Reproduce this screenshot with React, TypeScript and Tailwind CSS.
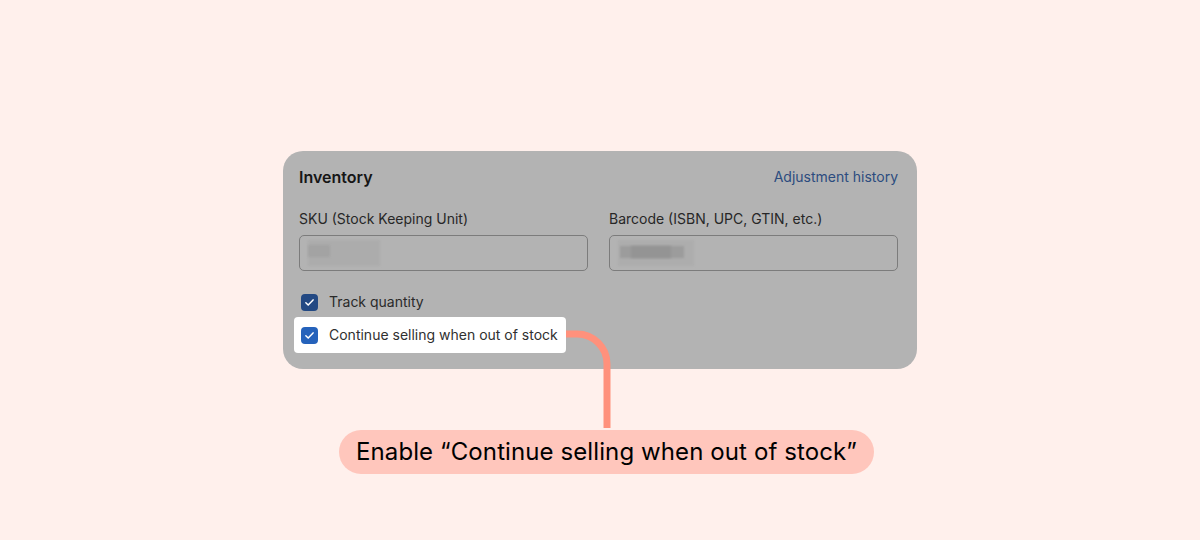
import React from 'react';

function Check() {
  return (
    <svg viewBox="0 0 16 16" className="w-[13px] h-[13px]" fill="none">
      <path d="M3.5 8.3l2.9 2.9 6-6.4" stroke="white" strokeWidth="1.8" strokeLinecap="round" strokeLinejoin="round" />
    </svg>
  );
}

function Box({ dim }: { dim?: boolean }) {
  return (
    <span className={`w-[17px] h-[17px] rounded-[4px] flex items-center justify-center flex-shrink-0 ${dim ? 'bg-[#234983]' : 'bg-[#2562bb]'}`}>
      <Check />
    </span>
  );
}

export default function App() {
  return (
    <div className="relative w-[1200px] h-[540px] bg-[#fff0ec] overflow-hidden" style={{ fontFamily: 'Inter, "Noto Sans", sans-serif' }}>
      {/* dimmed card */}
      <div className="ml-[283px] mt-[151px] w-[634px] h-[218px] rounded-[20px] bg-[#b3b3b3] pl-4 pr-[19px] pt-[16px]">
        <div className="flex items-center justify-between h-5">
          <h2 className="text-[16px] font-semibold text-[#161616]">Inventory</h2>
          <span className="text-sm text-[#2c4c7f]">Adjustment history</span>
        </div>

        <div className="grid grid-cols-2 gap-x-[21px] mt-[22px]">
          <div>
            <p className="text-sm leading-5 text-[#272727]">SKU (Stock Keeping Unit)</p>
            <div className="mt-[6px] h-9 rounded-[5px] border border-[#7c7c7c] relative overflow-hidden">
              <div className="absolute left-[8px] top-[4px] w-[72px] h-[26px] bg-[#acacac] blur-[1px]" />
              <div className="absolute left-[8px] top-[9px] w-[22px] h-[12px] bg-[#a3a3a3] blur-[1px]" />
            </div>
          </div>
          <div>
            <p className="text-sm leading-5 text-[#272727]">Barcode (ISBN, UPC, GTIN, etc.)</p>
            <div className="mt-[6px] h-9 rounded-[5px] border border-[#7c7c7c] relative overflow-hidden">
              <div className="absolute left-[8px] top-[4px] w-[76px] h-[26px] bg-[#adadad] blur-[1px]" />
              <div className="absolute left-[10px] top-[10px] w-[64px] h-[12px] bg-[#9c9c9c] blur-[1px]" />
              <div className="absolute left-[21px] top-[10px] w-[40px] h-[12px] bg-[#949494] blur-[1px]" />
            </div>
          </div>
        </div>

        <div className="mt-[22px] flex items-center gap-[11px] ml-[2px] h-[18px]">
          <Box dim />
          <span className="text-sm text-[#2a2a2a]">Track quantity</span>
        </div>

        <div className="mt-[6px] -ml-[5px] w-[272px] h-9 rounded-[4px] bg-white flex items-center gap-[11px] pl-[7px]">
          <Box />
          <span className="text-sm text-[#303030]">Continue selling when out of stock</span>
        </div>
      </div>

      {/* connector */}
      <svg className="absolute inset-0 pointer-events-none" width="1200" height="540">
        <path d="M566 334 H577 A30 30 0 0 1 607 364 V428" stroke="#ff917c" strokeWidth="7" fill="none" />
      </svg>

      <div className="ml-[339px] mt-[61px] w-[535px] h-[44px] rounded-full bg-[#ffc6bc] flex items-center justify-center">
        <span className="text-[24px] text-black tracking-[0.1px]">Enable “Continue selling when out of stock”</span>
      </div>
    </div>
  );
}
